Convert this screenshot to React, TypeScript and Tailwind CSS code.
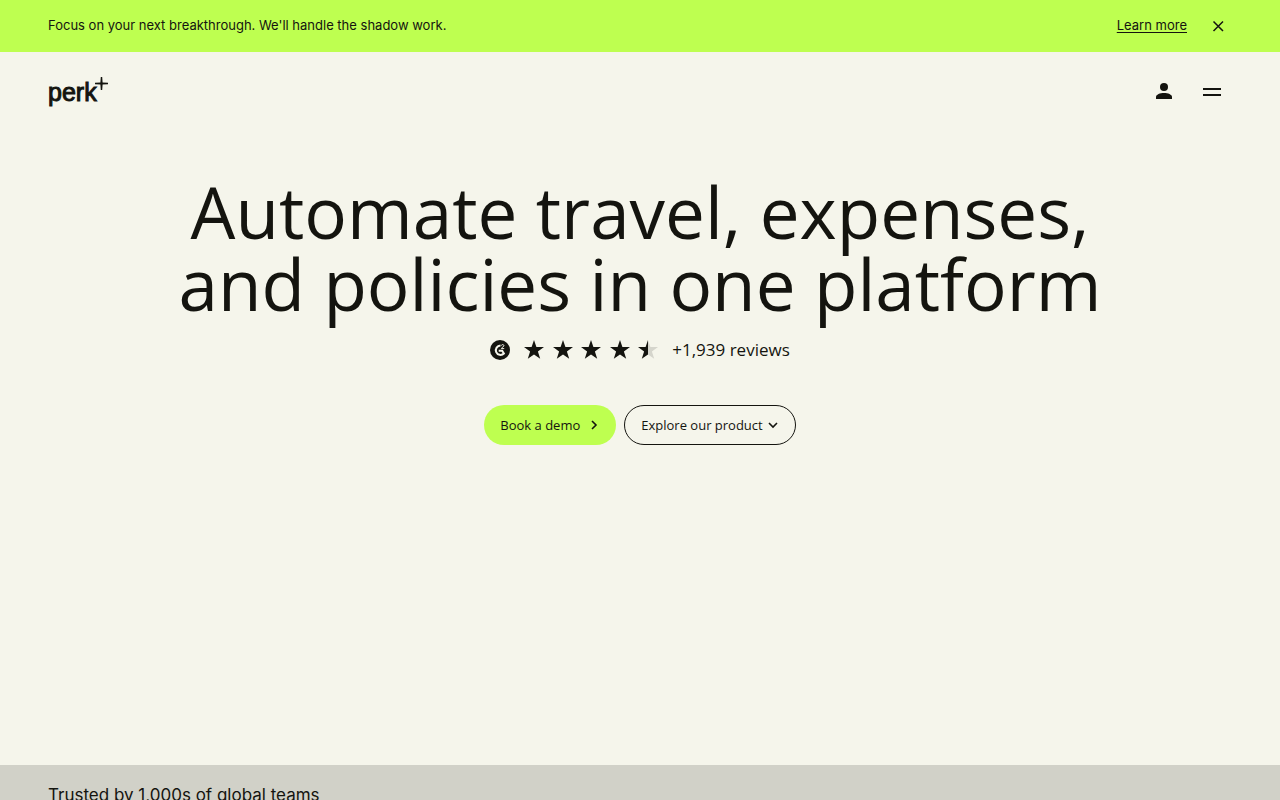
import { useState } from "react";

const STAR = "M10 0l2.4 7H20l-6.100 4.500 2.300 7.300L10 14.400l-6.200 4.400 2.300-7.300L0 7h7.600z";

const stars = [1, 1, 1, 1, 0.5];

function Banner({ onClose }: { onClose: () => void }) {
  return (
    <div className="flex min-h-[52px] items-center justify-between bg-[#beff50] pr-[54px] pl-12 font-['Inter',sans-serif] text-[13px] leading-5">
      <p className="pb-0.5">Focus on your next breakthrough. We'll handle the shadow work.</p>
      <div className="flex items-center gap-6">
        <a href="#learn-more" className="pb-0.5 underline underline-offset-2">
          Learn more
        </a>
        <button type="button" aria-label="Close banner" onClick={onClose}>
          <svg width="15" height="15" viewBox="0 0 15 15" fill="none" stroke="currentColor" strokeWidth="1.5">
            <path d="M2.500 2.500l9.500 9.500M12 2.500L2.500 12" />
          </svg>
        </button>
      </div>
    </div>
  );
}

function Logo() {
  return (
    <a href="#home" aria-label="Perk" className="flex h-8 items-start">
      <span className="pt-1 font-['Liberation_Sans',Arial,sans-serif] text-[25px] leading-6 [-webkit-text-stroke:1px]">
        perk
      </span>
      <svg className="-ml-0.5 mt-px" width="13" height="13" viewBox="0 0 13 13" fill="currentColor">
        <path d="M5.800 0h1.400l.4 5.400 5.400.4v1.400l-5.400.4-.4 5.400H5.800l-.4-5.400L0 7.200V5.800l5.400-.4z" />
      </svg>
    </a>
  );
}

function Header() {
  return (
    <header className="flex h-20 items-center justify-between pr-[59px] pl-12">
      <Logo />
      <nav className="flex items-center gap-[30px]">
        <a href="#account" aria-label="Account">
          <svg width="18" height="20" viewBox="0 0 18 20" fill="currentColor">
            <circle cx="9" cy="5" r="4" />
            <path d="M1 17v-2c0-2.500 4-4 8-4s8 1.500 8 4v2z" />
          </svg>
        </a>
        <button type="button" aria-label="Open menu">
          <svg width="18" height="18" viewBox="0 0 18 18" fill="currentColor">
            <path d="M0 5h18v2H0zM0 11h18v2H0z" />
          </svg>
        </button>
      </nav>
    </header>
  );
}

function G2Badge() {
  return (
    <svg width="20" height="20" viewBox="0 0 20 20" aria-label="G2">
      <circle cx="10" cy="10" r="10" fill="#14140f" />
      <path d="M10.500 5.500a4.700 4.700 0 1 0 3.400 8l-1.700-2.700H8.700" fill="none" stroke="#f5f5eb" strokeWidth="2" />
      <path d="M11.300 5.600c.2-1.400 2.600-1.400 2.600.1 0 1.300-2.300 1.400-2.500 2.900h2.800" fill="none" stroke="#f5f5eb" strokeWidth="1" />
    </svg>
  );
}

function Rating() {
  return (
    <div className="mt-[18px] flex items-center justify-center">
      <G2Badge />
      <div className="ml-3.5 flex w-[134px] justify-between" role="img" aria-label="4.5 out of 5 stars">
        {stars.map((fill, i) => (
          <svg key={i} width="20" height="20" viewBox="0 0 20 20">
            <defs>
              <linearGradient id={`star-${i}`}>
                <stop offset={fill} stopColor="#14140f" />
                <stop offset={fill} stopColor={fill < 1 ? "#d5d5cc" : "#14140f"} />
              </linearGradient>
            </defs>
            <path d={STAR} fill={`url(#star-${i})`} />
          </svg>
        ))}
      </div>
      <span className="ml-3.5 text-[17px] leading-6">+1,939 reviews</span>
    </div>
  );
}

function Chevron({ d }: { d: string }) {
  return (
    <svg width="20" height="20" viewBox="0 0 20 20" fill="none" stroke="currentColor" strokeWidth="1.6">
      <path d={d} />
    </svg>
  );
}

function Hero() {
  return (
    <section className="px-12 pt-11 pb-80 text-center">
      <h1 className="text-[71px] leading-[72px]">
        Automate travel, expenses,
        <br />
        and policies in one platform
      </h1>
      <Rating />
      <div className="mt-[43px] flex justify-center gap-2 text-[13px] leading-5">
        <button type="button" className="flex h-10 items-center gap-1 rounded-full bg-[#beff50] pr-3 pl-4">
          Book a demo
          <Chevron d="M8 6l4 4-4 4" />
        </button>
        <button type="button" className="flex h-10 items-center rounded-full border border-[#14140f] pr-3 pl-4">
          Explore our product
          <Chevron d="M6 8l4 4 4-4" />
        </button>
      </div>
    </section>
  );
}

function TrustedBy() {
  return (
    <section className="bg-[#d1d1c8] px-12 py-[18px] font-['Inter',sans-serif]">
      <h2 className="text-[17px] leading-6">Trusted by 1,000s of global teams</h2>
    </section>
  );
}

export default function App() {
  const [showBanner, setShowBanner] = useState(true);

  return (
    <div className="min-h-screen bg-[#f5f5eb] font-['Open_Sans',sans-serif] text-[#14140f]">
      {showBanner && <Banner onClose={() => setShowBanner(false)} />}
      <Header />
      <main>
        <Hero />
        <TrustedBy />
      </main>
    </div>
  );
}
